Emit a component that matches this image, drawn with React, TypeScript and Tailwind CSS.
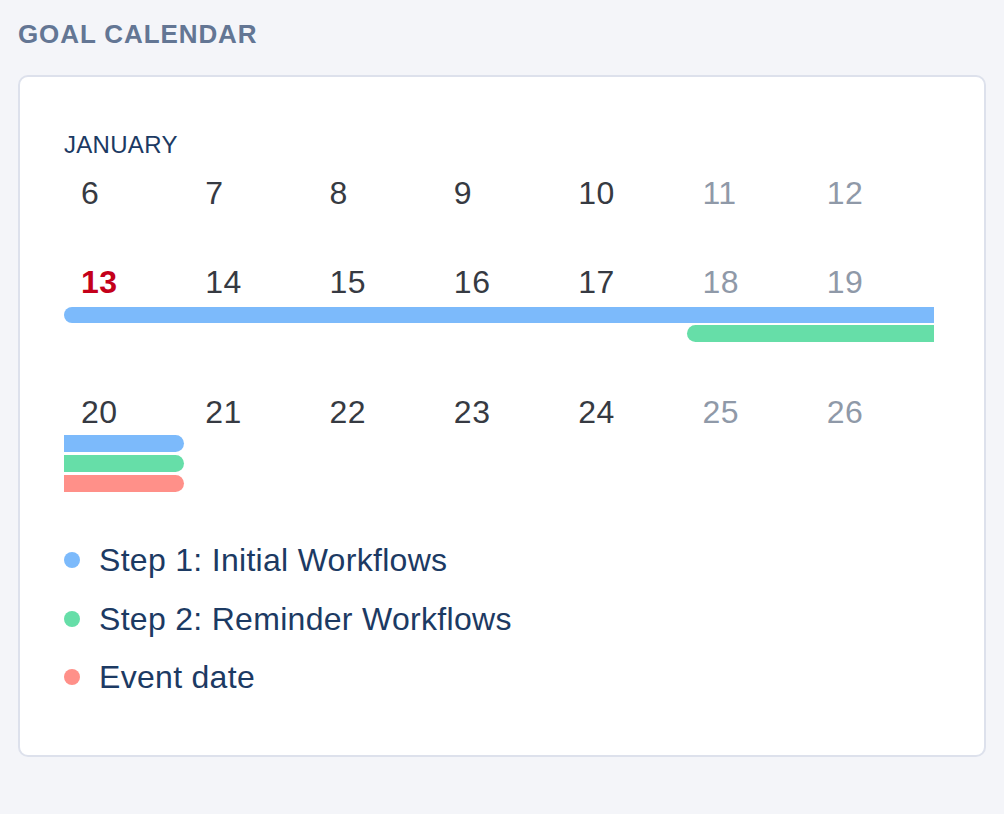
import React from "react";

type Day = { n: number; weekend?: boolean; today?: boolean };

const weeks: Day[][] = [
  [{ n: 6 }, { n: 7 }, { n: 8 }, { n: 9 }, { n: 10 }, { n: 11, weekend: true }, { n: 12, weekend: true }],
  [{ n: 13, today: true }, { n: 14 }, { n: 15 }, { n: 16 }, { n: 17 }, { n: 18, weekend: true }, { n: 19, weekend: true }],
  [{ n: 20 }, { n: 21 }, { n: 22 }, { n: 23 }, { n: 24 }, { n: 25, weekend: true }, { n: 26, weekend: true }],
];

const legend = [
  { label: "Step 1: Initial Workflows", color: "bg-[#7cbafb]" },
  { label: "Step 2: Reminder Workflows", color: "bg-[#66dea8]" },
  { label: "Event date", color: "bg-[#ff9089]" },
];

function DayRow({ days }: { days: Day[] }) {
  return (
    <div className="grid grid-cols-7 h-[40px] items-center">
      {days.map((d) => (
        <div
          key={d.n}
          className={
            "pl-[17px] text-[32px] leading-[40px] tracking-[0.5px] " +
            (d.today
              ? "text-[#c4001a] font-bold"
              : d.weekend
              ? "text-[#8f99a8]"
              : "text-[#363a42]")
          }
        >
          {d.n}
        </div>
      ))}
    </div>
  );
}

export default function App() {
  return (
    <div
      className="min-h-[814px] bg-[#f4f5f9] pt-[18px] px-[18px] pb-[56px]"
      style={{ fontFamily: '"Liberation Sans", Arial, sans-serif' }}
    >
      <h2 className="text-[26px] leading-[32px] font-semibold tracking-[0.9px] text-[#637694]">
        GOAL CALENDAR
      </h2>

      <div className="mt-[25px] w-[968px] bg-white border-2 border-[#dde1ec] rounded-[10px] pt-[54px] pl-[44px] pr-[49px] pb-[48px]">
        <div className="text-[24px] leading-[28px] tracking-[0.3px] text-[#1c3a63]">JANUARY</div>

        <div className="mt-[14px] w-[870px]">
          {/* week 1 */}
          <div className="h-[89px]">
            <DayRow days={weeks[0]} />
          </div>

          {/* week 2 */}
          <div className="h-[130px]">
            <DayRow days={weeks[1]} />
            <div className="mt-[5px] flex flex-col gap-[2px]">
              <div className="h-[16px] bg-[#7cbafb] rounded-l-full" />
              <div className="grid grid-cols-7">
                <div className="col-start-6 col-span-2 ml-[2px] h-[17px] bg-[#66dea8] rounded-l-full" />
              </div>
            </div>
          </div>

          {/* week 3 */}
          <div>
            <DayRow days={weeks[2]} />
            <div className="mt-[3px] grid grid-cols-7 gap-y-[3px]">
              <div className="col-start-1 mr-[4px] h-[17px] bg-[#7cbafb] rounded-r-full" />
              <div className="col-start-1 mr-[4px] h-[17px] bg-[#66dea8] rounded-r-full" />
              <div className="col-start-1 mr-[4px] h-[17px] bg-[#ff9089] rounded-r-full" />
            </div>
          </div>
        </div>

        <ul className="mt-[39px]">
          {legend.map((l) => (
            <li key={l.label} className="h-[58.5px] flex items-center gap-[19px]">
              <span className={"w-[16px] h-[16px] rounded-full " + l.color} />
              <span className="text-[32px] tracking-[0.3px] text-[#1c3a63]">{l.label}</span>
            </li>
          ))}
        </ul>
      </div>
    </div>
  );
}
